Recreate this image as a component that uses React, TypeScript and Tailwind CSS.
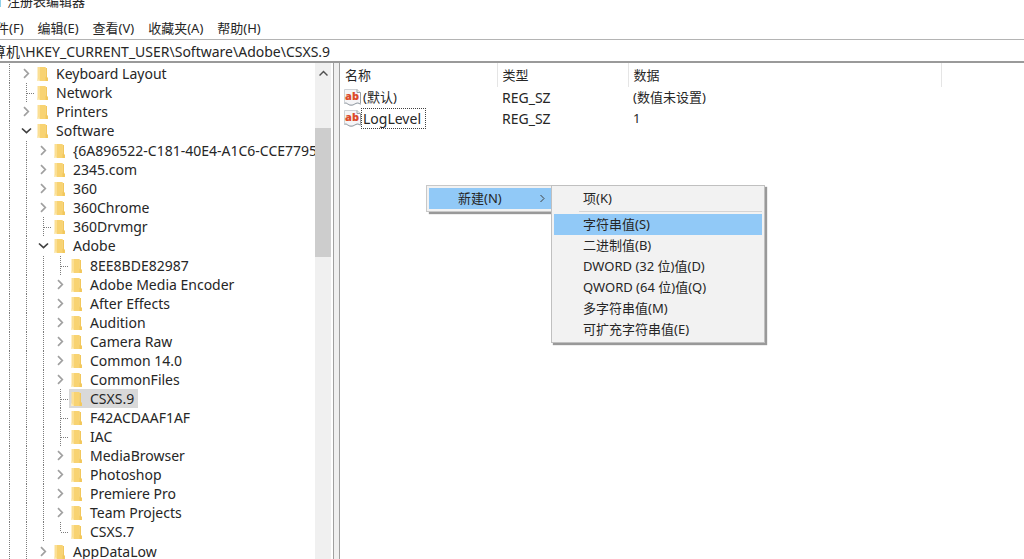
import { useState } from 'react';
import clsx from 'clsx';

interface KeyNode {
  name: string;
  children?: KeyNode[];
  closed?: boolean;
}

const TREE: KeyNode[] = [
  { name: 'Keyboard Layout', closed: true },
  { name: 'Network' },
  { name: 'Printers', closed: true },
  {
    name: 'Software',
    children: [
      { name: '{6A896522-C181-40E4-A1C6-CCE7795', closed: true },
      { name: '2345.com', closed: true },
      { name: '360', closed: true },
      { name: '360Chrome', closed: true },
      { name: '360Drvmgr' },
      {
        name: 'Adobe',
        children: [
          { name: '8EE8BDE82987' },
          { name: 'Adobe Media Encoder', closed: true },
          { name: 'After Effects', closed: true },
          { name: 'Audition', closed: true },
          { name: 'Camera Raw', closed: true },
          { name: 'Common 14.0', closed: true },
          { name: 'CommonFiles', closed: true },
          { name: 'CSXS.9' },
          { name: 'F42ACDAAF1AF' },
          { name: 'IAC' },
          { name: 'MediaBrowser', closed: true },
          { name: 'Photoshop', closed: true },
          { name: 'Premiere Pro', closed: true },
          { name: 'Team Projects', closed: true },
          { name: 'CSXS.7' },
        ],
      },
      { name: 'AppDataLow', closed: true },
    ],
  },
];

const MENUS = ['文件(F)', '编辑(E)', '查看(V)', '收藏夹(A)', '帮助(H)'];

const VALUES = [
  { name: '(默认)', type: 'REG_SZ', data: '(数值未设置)' },
  { name: 'LogLevel', type: 'REG_SZ', data: '1' },
];

const NEW_ITEMS = ['字符串值(S)', '二进制值(B)', 'DWORD (32 位)值(D)', 'QWORD (64 位)值(Q)', '多字符串值(M)', '可扩充字符串值(E)'];

function FolderIcon() {
  return (
    <svg viewBox="0 0 11 14" className="w-[11px] h-[14px] shrink-0">
      <path d="M.5 0h8v14h-8z" fill="#fbdf94" />
      <path d="M3 0h5.500v9.500L11 11v3H3z" fill="#f8d372" />
      <path d="M8.500 1H10v9l.8 1v3H8.500z" fill="#f2c75c" />
      <path d="M0 11l3 3H0z" fill="#fcebb9" />
    </svg>
  );
}

function StringIcon() {
  return (
    <svg viewBox="0 0 17 17" className="w-[17px] h-[17px] shrink-0">
      <path d="M.5.5h12.500l3.500 3v11.700c-2-1.600-4-1.400-6 0s-5 1.400-7-.4c-1-.8-2-.9-3-.5z" fill="#f5f5f7" stroke="#cfd2d6" />
      <path d="M13 .5v3h3.500v11" fill="#fff" stroke="#9aa0a6" />
      <path d="M.5 14.300c1-.4 2-.3 3 .5 2 1.800 5 1.800 7 .4s4-1.600 6 0" fill="none" stroke="#9aa2a9" />
      <text x="8" y="11" textAnchor="middle" fontSize="11" fontWeight="800" fontFamily="Open Sans, sans-serif" fill="#dc4a2b">ab</text>
    </svg>
  );
}

function Chevron({ open }: { open: boolean }) {
  return (
    <svg viewBox="0 0 11 11" className="w-[11px] h-[11px]" fill="none" strokeWidth="1.7">
      {open ? <path d="M1 3.500 5.500 7.700 10 3.500" stroke="#404040" /> : <path d="M3 1.200l4.300 4.300L3 9.800" stroke="#a0a0a0" />}
    </svg>
  );
}

function Guide() {
  return (
    <span className="w-[17px] self-stretch flex justify-center shrink-0">
      <span className="border-l border-dotted border-[#7c7c7c]" />
    </span>
  );
}

function Elbow({ last }: { last: boolean }) {
  return (
    <svg viewBox="0 0 17 19" className="w-[17px] h-[19px] shrink-0" fill="none" stroke="#7c7c7c" strokeDasharray="1 1">
      <path d={last ? 'M8.500 0v10' : 'M8.500 0v19'} />
      <path d="M9 10.500h7" />
    </svg>
  );
}

interface RowProps {
  node: KeyNode; depth: number; last: boolean;
  selected: string; onSelect: (name: string) => void;
}

function TreeRow({ node, depth, last, selected, onSelect }: RowProps) {
  const [open, setOpen] = useState(!!node.children);
  const expandable = node.closed || !!node.children;

  return (
    <li>
      <div className="flex items-center h-[19px]">
        {Array.from({ length: depth }, (_, i) => <Guide key={i} />)}
        {expandable ? (
          <button
            aria-label={`${open ? 'Collapse' : 'Expand'} ${node.name}`}
            onClick={() => setOpen(!open)}
            className="w-[17px] h-[19px] flex items-center justify-center shrink-0"
          >
            <Chevron open={open} />
          </button>
        ) : <Elbow last={last} />}
        <button
          onClick={() => onSelect(node.name)}
          className={clsx('flex items-center h-[19px] gap-2 pl-[2px] pr-1 whitespace-nowrap', selected === node.name && 'bg-[#d9d9d9]')}
        >
          <FolderIcon />
          {node.name}
        </button>
      </div>
      {open && node.children && (
        <ul className={depth > 1 ? 'py-px' : 'pt-px'}>
          {node.children.map((c, i) => (
            <TreeRow key={c.name} node={c} depth={depth + 1} last={i === node.children!.length - 1} selected={selected} onSelect={onSelect} />
          ))}
        </ul>
      )}
    </li>
  );
}

function ContextMenu() {
  return (
    <div className="absolute left-[426px] top-[185px] flex items-start text-[13px]">
      <div className="w-[125px] border border-r-0 border-[#c8c8c8] bg-[#f2f2f2] p-[2px] pr-0 shadow-[3px_2px_1px_rgba(0,0,0,0.4)]">
        <button className="w-full h-[21px] bg-[#91c9f7] flex items-center justify-between pl-[29px] pr-1">
          新建(N)
          <svg viewBox="0 0 9 9" className="w-[9px] h-[9px]" fill="none" stroke="#404040">
            <path d="M2.500 1l3.500 3.500-3.500 3.500" />
          </svg>
        </button>
      </div>
      <div className="relative w-[214px] border border-[#c0c0c0] bg-[#f2f2f2] p-[2px] shadow-[2px_2px_1px_rgba(0,0,0,0.4)]">
        <button className="block w-full h-[21px] pl-[29px] text-left">项(K)</button>
        <hr className="ml-[25px] my-[2px] border-[#d4d4d4]" />
        {NEW_ITEMS.map((item, i) => (
          <button key={item} className={clsx('block w-full h-[21px] pl-[29px] text-left', i === 0 && 'bg-[#91c9f7]')}>
            {item}
          </button>
        ))}
      </div>
    </div>
  );
}

export default function App() {
  const [selected, setSelected] = useState('CSXS.9');
  const [path, setPath] = useState('计算机\\HKEY_CURRENT_USER\\Software\\Adobe\\CSXS.9');

  return (
    <div className="relative h-screen overflow-hidden flex flex-col bg-white text-[#262626] text-[14px] leading-[19px] font-['Noto_Sans','Noto_Sans_CJK_SC',sans-serif]">
      <header className="shrink-0">
        <div className="h-[11px] overflow-hidden flex items-end gap-[6px]">
          <span className="w-px h-2 mb-1 bg-[#8fd0ea]" />
          <h1 className="text-[13px]">注册表编辑器</h1>
        </div>
        <nav className="flex items-center gap-[14px] h-7 pt-[7px] -ml-[17px] text-[13px]">
          {MENUS.map(m => <button key={m} className="whitespace-nowrap">{m}</button>)}
        </nav>
        <div className="border-t border-[#b4b4b4] border-b-2 border-b-[#9a9a9a] h-6 -ml-[22px]">
          <input
            aria-label="地址"
            value={path}
            onChange={e => setPath(e.target.value)}
            className="block w-full h-[21px] outline-none"
          />
        </div>
      </header>

      <main className="flex flex-1 min-h-0">
        <section className="w-[334px] shrink-0 flex border-r border-[#a0a0a0] pr-[2px]">
          <ul className="flex-1 min-w-0 overflow-hidden pl-px pt-px">
            {TREE.map((n, i) => (
              <TreeRow key={n.name} node={n} depth={1} last={i === TREE.length - 1} selected={selected} onSelect={setSelected} />
            ))}
          </ul>
          <div className="w-4 shrink-0 bg-[#f0f0f0]">
            <button aria-label="Scroll up" className="w-4 h-[65px] flex justify-center pt-[6px]">
              <svg viewBox="0 0 9 9" className="w-[9px] h-[9px]" fill="none" stroke="#505050" strokeWidth="1.5">
                <path d="M.5 6.500l4-4 4 4" />
              </svg>
            </button>
            <div className="h-[129px] bg-[#cdcdcd]" />
          </div>
        </section>
        <div className="w-[6px] shrink-0 bg-[#f0f0f0] border-r border-[#a0a0a0]" />

        <section className="flex-1 min-w-0">
          <table className="w-full table-fixed border-collapse text-[13px]">
            <colgroup>
              <col className="w-[157px]" />
              <col className="w-[131px]" />
              <col className="w-[313px]" />
              <col />
            </colgroup>
            <thead>
              <tr className="h-6">
                {['名称', '类型', '数据'].map(h => (
                  <th key={h} className="border-r border-[#e5e5e5] pl-[5px] p-0 text-left font-normal">{h}</th>
                ))}
                <td />
              </tr>
            </thead>
            <tbody>
              {VALUES.map((v, i) => (
                <tr key={v.name} className="h-[21px]">
                  <td className="p-0 pl-1">
                    <div className="flex items-center h-[21px]">
                      <StringIcon />
                      <span className={clsx('border px-px', i === 1 ? 'border-dotted border-[#404040] pr-1 text-[14px]' : 'border-transparent')}>{v.name}</span>
                    </div>
                  </td>
                  <td className="p-0 pl-[5px] text-[14px]">{v.type}</td>
                  <td className="p-0 pl-[5px]">{v.data}</td>
                  <td />
                </tr>
              ))}
            </tbody>
          </table>
        </section>
      </main>

      <ContextMenu />
    </div>
  );
}
